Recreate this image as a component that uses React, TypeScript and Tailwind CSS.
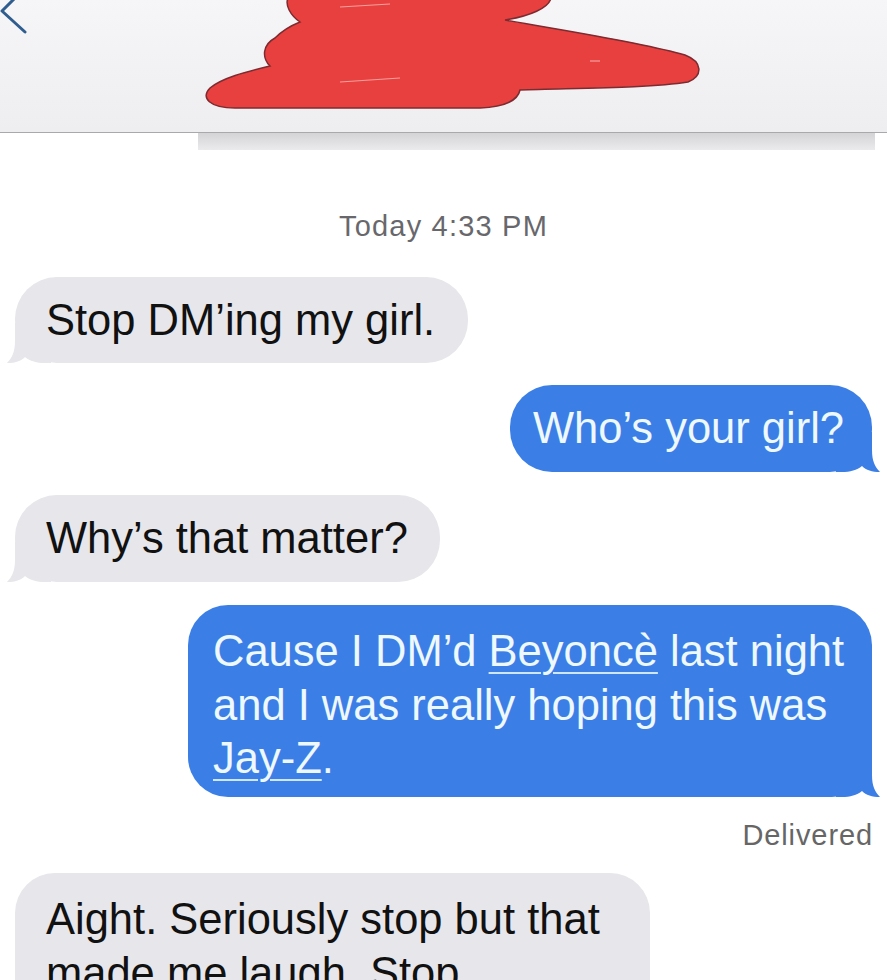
import React from "react";

function GrayTail() {
  return (
    <svg
      className="absolute left-[-8px] bottom-0"
      width="44"
      height="40"
      viewBox="0 0 44 40"
    >
      <path
        d="M8 0 L8 18 C8 29 5 35 0 40 C8 40 14 38 18 34 C23 38 30 40 38 40 L44 40 L44 0 Z"
        fill="#e6e6eb"
      />
    </svg>
  );
}

function BlueTail() {
  return (
    <svg
      className="absolute right-[-8px] bottom-0"
      width="44"
      height="40"
      viewBox="0 0 44 40"
    >
      <path
        d="M36 0 L36 18 C36 29 39 35 44 40 C36 40 30 38 26 34 C21 38 14 40 6 40 L0 40 L0 0 Z"
        fill="#3b7fe6"
      />
    </svg>
  );
}

export default function App() {
  return (
    <div className="w-[887px] h-[980px] overflow-hidden bg-white font-['Liberation_Sans',Arial,sans-serif]">
      {/* Header */}
      <div className="relative h-[133px] bg-gradient-to-b from-[#f6f6f8] to-[#eeeef0] border-b border-[#a9a9ad]">
        <svg className="absolute left-0 top-0" width="40" height="40" viewBox="0 0 40 40">
          <path d="M15 -2 L2 11 L25 32" fill="none" stroke="#2f5d8f" strokeWidth="3" strokeLinecap="round" strokeLinejoin="round" />
        </svg>
        <svg className="absolute left-0 top-0" width="887" height="133" viewBox="0 0 887 133">
          <path
            d="M288 -2 L551 -2 C549 8 530 16 505 20 C560 30 640 42 685 55 C703 62 703 76 688 82 C650 88 580 88 520 90 C518 100 505 107 480 108 L235 108 C210 108 200 98 210 88 C222 78 245 72 270 66 C262 58 262 45 275 38 C285 28 295 24 300 22 C290 15 285 5 288 -2 Z"
            fill="#e8403f"
            stroke="#7d2b30"
            strokeWidth="1.5"
          />
          <path d="M340 7 L390 4" stroke="#f4a0a0" strokeWidth="1.2" />
          <path d="M340 82 L400 78" stroke="#f4a0a0" strokeWidth="1.2" />
          <path d="M590 61 L600 61" stroke="#f4a0a0" strokeWidth="1.2" />
        </svg>
      </div>
      <div className="flex h-[17px]">
        <div className="w-[198px]" />
        <div className="flex-1 mr-[12px] bg-gradient-to-b from-[#d4d4d6] to-[#ebebed]" />
      </div>

      {/* Timestamp */}
      <div className="mt-[59px] text-center text-[29px] leading-[34px] tracking-[1.2px] text-[#68686c]">
        Today 4:33 PM
      </div>

      {/* Messages */}
      <div className="flex flex-col text-[43.5px] tracking-[0px]">
        <div className="mt-[34px] ml-[15px] relative w-[453px] h-[86px]">
          <GrayTail />
          <div className="relative h-full rounded-[42px] bg-[#e6e6eb] pl-[31px] leading-[86px] text-[#111111]">
            Stop DM’ing my girl.
          </div>
        </div>

        <div className="mt-[22px] self-end mr-[15px] relative w-[362px] h-[87px]">
          <BlueTail />
          <div className="relative h-full rounded-[42px] bg-[#3b7fe6] pl-[23px] leading-[87px] text-[#eef8ff]">
            Who’s your girl?
          </div>
        </div>

        <div className="mt-[23px] ml-[15px] relative w-[425px] h-[87px]">
          <GrayTail />
          <div className="relative h-full rounded-[42px] bg-[#e6e6eb] pl-[31px] leading-[87px] text-[#111111]">
            Why’s that matter?
          </div>
        </div>

        <div className="mt-[23px] self-end mr-[15px] relative w-[684px] h-[192px]">
          <BlueTail />
          <div className="relative h-full rounded-[40px] bg-[#3b7fe6] pl-[25px] pt-[20px] leading-[53.5px] text-[#eef8ff]">
            Cause I DM’d{" "}
            <span className="underline decoration-[#cfe6ff] decoration-2 underline-offset-[6px]">Beyoncè</span> last night
            <br />
            and I was really hoping this was
            <br />
            <span className="underline decoration-[#cfe6ff] decoration-2 underline-offset-[6px]">Jay-Z</span>.
          </div>
        </div>

        <div className="mt-[21px] self-end mr-[14px] text-[29px] leading-[34px] tracking-[0.9px] text-[#666666]">
          Delivered
        </div>

        <div className="mt-[21px] ml-[15px] relative w-[635px] h-[200px]">
          <div className="relative h-full rounded-[40px] bg-[#e6e6eb] pl-[31px] pt-[20px] leading-[53.5px] text-[#111111]">
            Aight. Seriously stop but that
            <br />
            made me laugh. Stop.
          </div>
        </div>
      </div>
    </div>
  );
}
